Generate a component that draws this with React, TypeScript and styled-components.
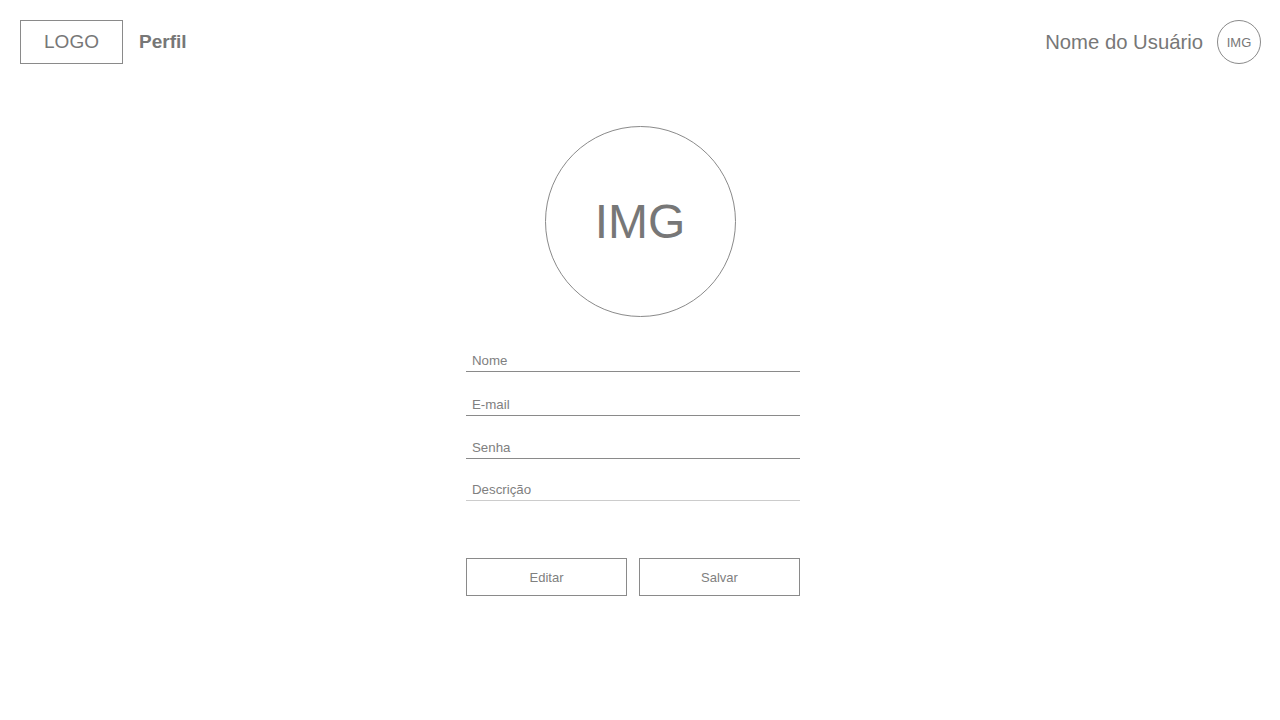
import * as React from 'react';
import styled, { createGlobalStyle } from 'styled-components';

const GlobalStyle = createGlobalStyle`
  html, body {
    margin: 0;
    padding: 0;
    background: #ffffff;
    font-family: 'Liberation Sans', Arial, sans-serif;
    color: #777777;
  }
`;

const fields = [
  { label: 'Nome', light: false, spacing: 21 },
  { label: 'E-mail', light: false, spacing: 22 },
  { label: 'Senha', light: false, spacing: 21 },
  { label: 'Descrição', light: true, spacing: 20 },
];

export default function App() {
  return (
    <>
      <GlobalStyle />
      <Page>
        <Header>
          <Brand>
            <LogoBox>LOGO</LogoBox>
            <PageTitle>Perfil</PageTitle>
          </Brand>
          <UserArea>
            <UserName>Nome do Usuário</UserName>
            <Avatar size={44} fontSize={13}>
              IMG
            </Avatar>
          </UserArea>
        </Header>

        <Main>
          <Avatar size={191} fontSize={48}>
            IMG
          </Avatar>
          <Form>
            {fields.map((f) => (
              <Field key={f.label} light={f.light} spacing={f.spacing}>
                {f.label}
              </Field>
            ))}
            <Actions>
              <Button>Editar</Button>
              <Button>Salvar</Button>
            </Actions>
          </Form>
        </Main>
      </Page>
    </>
  );
}

const Page = styled.div`
  width: 1280px;
  min-height: 720px;
`;

const Header = styled.header`
  display: flex;
  justify-content: space-between;
  align-items: center;
  padding: 20px 19px 0 20px;
  height: 44px;
`;

const Brand = styled.div`
  display: flex;
  align-items: center;
  gap: 16px;
`;

const LogoBox = styled.div`
  box-sizing: border-box;
  width: 103px;
  height: 44px;
  border: 1px solid #8a8a8a;
  display: flex;
  align-items: center;
  justify-content: center;
  font-size: 19px;
  color: #777777;
`;

const PageTitle = styled.span`
  font-size: 19px;
  font-weight: bold;
  color: #777777;
`;

const UserArea = styled.div`
  display: flex;
  align-items: center;
  gap: 14px;
`;

const UserName = styled.span`
  font-size: 20.3px;
  color: #777777;
`;

const Avatar = styled.div<{ size: number; fontSize: number }>`
  box-sizing: border-box;
  width: ${({ size }) => size}px;
  height: ${({ size }) => size}px;
  border-radius: 50%;
  border: 1px solid #8a8a8a;
  display: flex;
  align-items: center;
  justify-content: center;
  font-size: ${({ fontSize }) => fontSize}px;
  color: #777777;
`;

const Main = styled.main`
  display: flex;
  flex-direction: column;
  align-items: center;
  padding-top: 62px;
`;

const Form = styled.div`
  width: 334px;
  margin-right: 14px;
  display: flex;
  flex-direction: column;
  padding-top: 12px;
`;

const Field = styled.div<{ light: boolean; spacing: number }>`
  box-sizing: border-box;
  height: 22px;
  margin-top: ${({ spacing }) => spacing}px;
  padding: 3px 0 2px 6px;
  line-height: 16px;
  font-size: 13.3px;
  color: #808080;
  border-bottom: 1px solid ${({ light }) => (light ? '#cccccc' : '#8a8a8a')};
`;

const Actions = styled.div`
  display: flex;
  gap: 12px;
  margin-top: 57px;
`;

const Button = styled.button`
  box-sizing: border-box;
  width: 161px;
  height: 38px;
  border: 1px solid #8a8a8a;
  background: #ffffff;
  font-family: 'Liberation Sans', Arial, sans-serif;
  font-size: 13px;
  color: #808080;
  padding: 0;
  cursor: pointer;
`;
